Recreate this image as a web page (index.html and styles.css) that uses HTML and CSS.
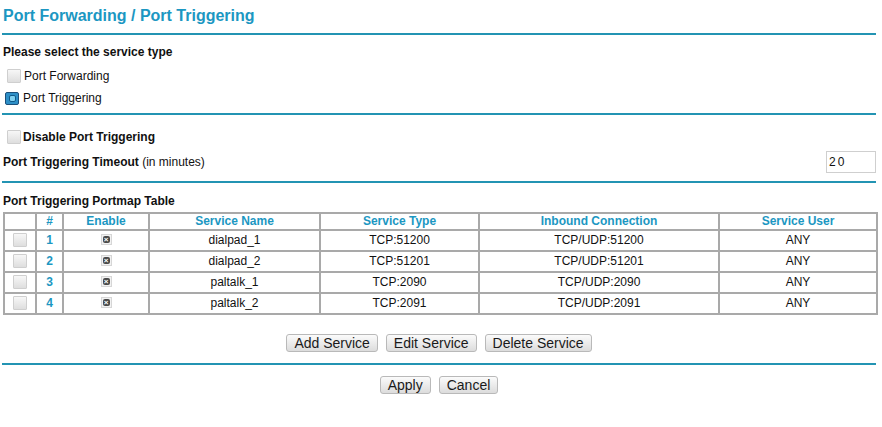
FILE: index.html
```html
<!DOCTYPE html>
<html>
<head>
<meta charset="utf-8">
<link rel="stylesheet" href="styles.css">
</head>
<body>
<div class="page">
  <h1 class="title">Port Forwarding / Port Triggering</h1>
  <div class="rule"></div>

  <div class="label bold first">Please select the service type</div>
  <div class="opt"><span class="cb"></span><span>Port Forwarding</span></div>
  <div class="opt"><span class="radio"><span class="dot"></span></span><span>Port Triggering</span></div>
  <div class="rule r2"></div>

  <div class="opt disable"><span class="cb"></span><span class="bold">Disable Port Triggering</span></div>
  <div class="timeout">
    <span><span class="bold">Port Triggering Timeout</span> (in minutes)</span>
    <span class="input">20</span>
  </div>
  <div class="rule r3"></div>

  <div class="label bold tlabel">Port Triggering Portmap Table</div>
  <table class="grid">
    <colgroup>
      <col style="width:32px"><col style="width:27px"><col style="width:86px"><col style="width:171px"><col style="width:159px"><col style="width:240px"><col style="width:158px">
    </colgroup>
    <thead>
      <tr><th></th><th>#</th><th>Enable</th><th>Service Name</th><th>Service Type</th><th>Inbound Connection</th><th>Service User</th></tr>
    </thead>
    <tbody>
      <tr><td><span class="cb"></span></td><td class="num">1</td><td><span class="en"><span class="enx">&times;</span></span></td><td>dialpad_1</td><td>TCP:51200</td><td>TCP/UDP:51200</td><td>ANY</td></tr>
      <tr><td><span class="cb"></span></td><td class="num">2</td><td><span class="en"><span class="enx">&times;</span></span></td><td>dialpad_2</td><td>TCP:51201</td><td>TCP/UDP:51201</td><td>ANY</td></tr>
      <tr><td><span class="cb"></span></td><td class="num">3</td><td><span class="en"><span class="enx">&times;</span></span></td><td>paltalk_1</td><td>TCP:2090</td><td>TCP/UDP:2090</td><td>ANY</td></tr>
      <tr><td><span class="cb"></span></td><td class="num">4</td><td><span class="en"><span class="enx">&times;</span></span></td><td>paltalk_2</td><td>TCP:2091</td><td>TCP/UDP:2091</td><td>ANY</td></tr>
    </tbody>
  </table>

  <div class="buttons svc">
    <span class="btn">Add Service</span>
    <span class="btn">Edit Service</span>
    <span class="btn">Delete Service</span>
  </div>
  <div class="rule r4"></div>
  <div class="buttons apply">
    <span class="btn">Apply</span>
    <span class="btn">Cancel</span>
  </div>
</div>
</body>
</html>
```

FILE: styles.css
```css
html, body {
  margin: 0;
  padding: 0;
  background: #ffffff;
}
body {
  font-family: "Liberation Sans", Arial, sans-serif;
  font-size: 12px;
  color: #111;
}
.page {
  width: 874px;
  padding: 0 6px 0 2px;
  display: flex;
  flex-direction: column;
}
.title {
  margin: 0;
  padding: 6px 0 0 1px;
  height: 27px;
  line-height: 20px;
  font-size: 16px;
  font-weight: bold;
  color: #1c97c2;
}
.rule {
  height: 2px;
  background: #2394b3;
}
.bold { font-weight: bold; }
.label {
  line-height: 16px;
  padding-left: 1px;
}
.first { margin-top: 9px; margin-bottom: 5px; }
.opt {
  height: 22px;
  line-height: 22px;
  display: flex;
  align-items: center;
  padding-left: 5px;
}
.opt .cb { margin: 0 3px 0 0; }
.cb {
  display: inline-block;
  width: 12px;
  height: 12px;
  border: 1px solid #cfcfcf;
  border-radius: 1px;
  background: linear-gradient(#f7f7f7, #dedede);
  box-sizing: content-box;
}
.radio {
  display: inline-block;
  width: 12px;
  height: 11px;
  margin: 0 4px 0 -2px;
  border: 1px solid #1b4f7a;
  border-radius: 2px;
  background: #2d8fc7;
  position: relative;
}
.radio .dot {
  position: absolute;
  left: 3px;
  top: 2px;
  width: 7px;
  height: 7px;
  border-radius: 2px;
  background: #7fd0f0;
  border: 1px solid #0e5a8a;
  box-sizing: border-box;
}
.r2 { margin-top: 4px; }
.disable { margin-top: 11px; }
.disable .cb { margin-right: 2px; }
.timeout {
  margin-top: 3px;
  height: 22px;
  display: flex;
  align-items: center;
  justify-content: space-between;
  padding-left: 1px;
}
.input {
  width: 46px;
  height: 20px;
  border: 1px solid #cfcfcf;
  background: #fff;
  line-height: 20px;
  padding-left: 2px;
  box-sizing: content-box;
  letter-spacing: 2px;
  font-size: 12px;
}
.r3 { margin-top: 8px; }
.tlabel { margin-top: 10px; margin-bottom: 3px; }
.grid {
  margin-left: 1px;
  width: 873px;
  table-layout: fixed;
  border-collapse: collapse;
  border: 2px solid #a9a9a9;
}
.grid th, .grid td {
  border: 2px solid #a9a9a9;
  padding: 0;
  text-align: center;
  vertical-align: middle;
}
.grid th {
  height: 15px;
  line-height: 15px;
  color: #1c97c2;
  font-weight: bold;
}
.grid td {
  height: 19px;
  line-height: 19px;
}
.grid td .cb {
  vertical-align: middle;
  margin-top: -2px;
}
.grid td.num {
  color: #1c97c2;
  font-weight: bold;
}
.en {
  display: inline-block;
  width: 9px;
  height: 9px;
  border: 1px solid #d6d6d6;
  background: #f2f2f2;
  vertical-align: middle;
  margin-top: -2px;
  position: relative;
}
.enx {
  position: absolute;
  left: 1px;
  top: 1px;
  width: 7px;
  height: 7px;
  border-radius: 2px;
  background: #4a4a4a;
  color: #fff;
  font-size: 8px;
  line-height: 7px;
  text-align: center;
  font-weight: bold;
}
.buttons {
  display: flex;
  justify-content: center;
  gap: 8px;
}
.svc { margin-top: 19px; }
.btn {
  display: inline-block;
  height: 16px;
  line-height: 16px;
  padding: 0 7px;
  border: 1px solid #b9b9b9;
  border-radius: 3px;
  background: linear-gradient(#fbfbfb, #dcdcdc);
  font-size: 14px;
  color: #1a1a1a;
}
.r4 { margin-top: 11px; }
.apply { margin-top: 11px; }
```
